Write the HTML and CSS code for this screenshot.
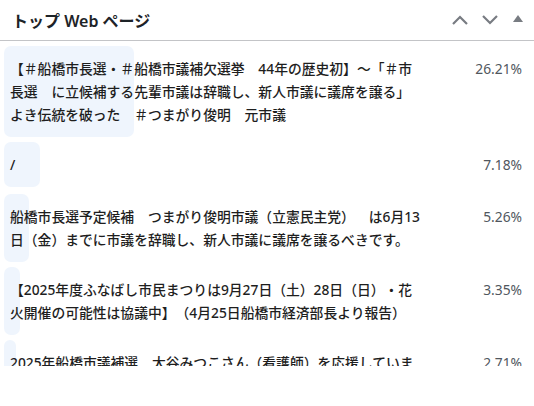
FILE: index.html
```html
<html>
<head>
<meta charset="utf-8">
<title>トップ Web ページ</title>
<meta name="viewport" content="width=device-width, initial-scale=1">
<link rel="stylesheet" href="styles.css">
</head>
<body>

<div class="widget">
	<div class="cabecalho">
		<h2 class="titulo">トップ Web ページ</h2>
		<div class="botoes">
			<span class="botao">
				<svg width="16" height="10" viewBox="0 0 16 10"><path d="M1 9 L8 2 L15 9" fill="none" stroke="#787c82" stroke-width="2.2"/></svg>
			</span>
			<span class="botao">
				<svg width="16" height="10" viewBox="0 0 16 10"><path d="M1 1 L8 8 L15 1" fill="none" stroke="#787c82" stroke-width="2.2"/></svg>
			</span>
			<span class="botao botaoSeta">
				<svg width="10" height="7" viewBox="0 0 10 7"><path d="M5 0 L10 7 L0 7 Z" fill="#787c82"/></svg>
			</span>
		</div>
	</div>

	<div class="lista">
		<div class="linha">
			<span class="barra" style="width: 130px"></span>
			<div class="texto">【＃船橋市長選・＃船橋市議補欠選挙　44年の歴史初】～「＃市長選　に立候補する先輩市議は辞職し、新人市議に議席を譲る」よき伝統を破った　＃つまがり俊明　元市議</div>
			<div class="valor">26.21%</div>
		</div>
		<div class="linha linhaCurta">
			<span class="barra" style="width: 36px"></span>
			<div class="texto">/</div>
			<div class="valor">7.18%</div>
		</div>
		<div class="linha">
			<span class="barra" style="width: 25px"></span>
			<div class="texto">船橋市長選予定候補　つまがり俊明市議（立憲民主党）　は6月13日（金）までに市議を辞職し、新人市議に議席を譲るべきです。</div>
			<div class="valor">5.26%</div>
		</div>
		<div class="linha">
			<span class="barra" style="width: 16px"></span>
			<div class="texto">【2025年度ふなばし市民まつりは9月27日（土）28日（日）・花火開催の可能性は協議中】（4月25日船橋市経済部長より報告）</div>
			<div class="valor">3.35%</div>
		</div>
		<div class="linha">
			<span class="barra" style="width: 12px"></span>
			<div class="texto">2025年船橋市議補選　大谷みつこさん（看護師）を応援しています！</div>
			<div class="valor">2.71%</div>
		</div>
	</div>
</div>

</body>
</html>
```

FILE: styles.css
```css
	body{
		margin: 0;
		background: #ffffff;
		font-family: "Noto Sans", "Noto Sans CJK JP", sans-serif;
		color: #1e1e1e;
		text-spacing-trim: space-all;
	}

	.widget{
		width: 534px;
	}

	.cabecalho{
		display: flex;
		align-items: center;
		justify-content: space-between;
		height: 40px;
		padding: 0 10px 0 12px;
		border-bottom: 1px solid #c3c4c7;
	}

	.titulo{
		margin: 0;
		font-size: 16px;
		font-weight: 600;
		color: #1d2327;
	}

	.botoes{
		display: flex;
		align-items: center;
		gap: 14px;
	}

	.botao{
		display: flex;
		align-items: center;
		justify-content: center;
		width: 16px;
		height: 20px;
	}

	.botaoSeta{
		width: 12px;
		margin-top: -4px;
	}

	.lista{
		display: flex;
		flex-direction: column;
		gap: 5px;
		height: 320px;
		padding: 5px 0 0 4px;
		overflow: hidden;
	}

	.linha{
		position: relative;
		display: flex;
		align-items: flex-start;
		font-size: 13.8px;
		line-height: 23px;
	}

	.linhaCurta{
		margin-bottom: 2px;
	}

	.barra{
		position: absolute;
		top: 0;
		left: 0;
		bottom: 0;
		background: #eff5fd;
		border-radius: 7px;
	}

	.texto{
		position: relative;
		width: 413px;
		padding: 11px 6px 11px 6px;
		font-weight: 500;
	}

	.valor{
		position: relative;
		flex: 1;
		padding: 11px 12px 11px 0;
		text-align: right;
		color: #50575e;
		font-weight: 400;
	}
```
